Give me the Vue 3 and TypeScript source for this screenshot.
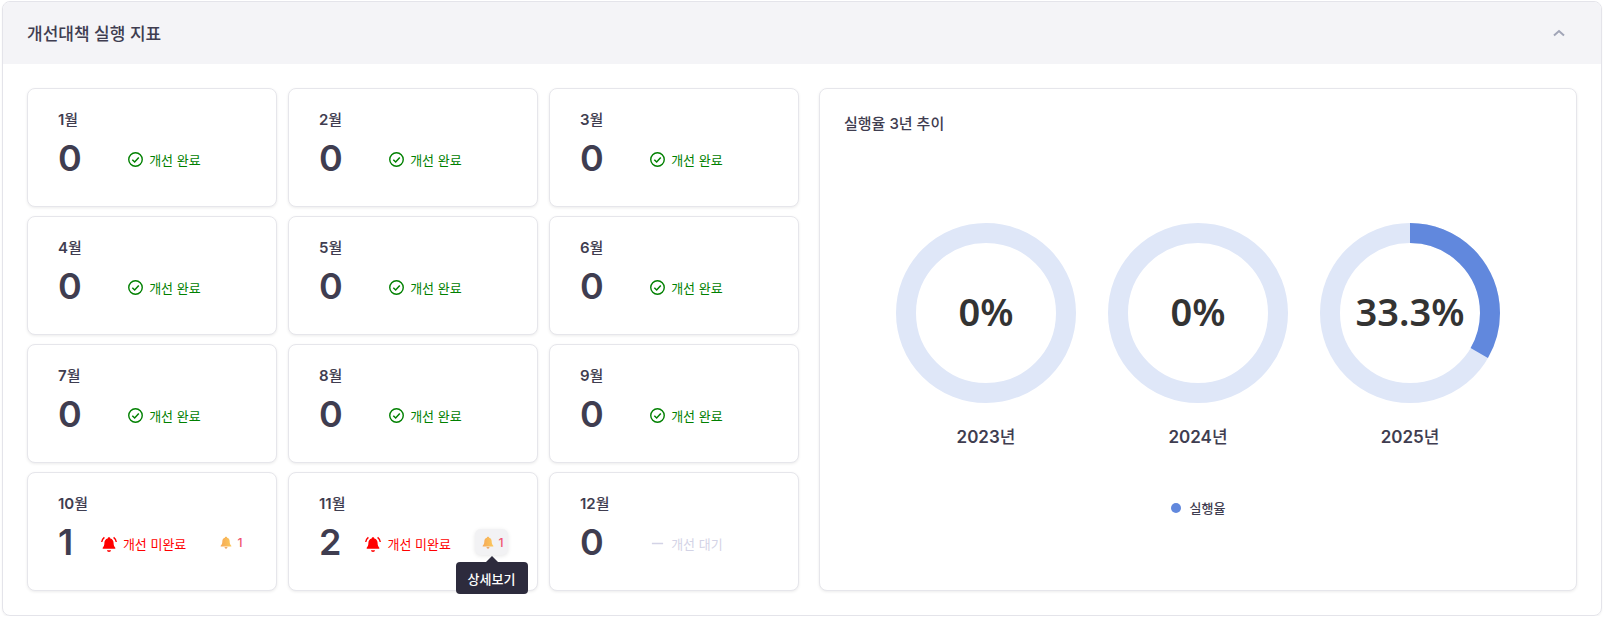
<template>
  <div class="panel">
    <div class="panel-head">
      <h3 class="panel-title">개선대책 실행 지표</h3>
      <svg class="chevron" width="14" height="14" viewBox="0 0 14 14">
        <path d="M2 9.5 L7 5 L12 9.5" fill="none" stroke="#a1a5b7" stroke-width="2" />
      </svg>
    </div>
    <div class="panel-body">
      <div class="months">
        <div v-for="m in months" :key="m.month" class="month">
          <div class="month-label"><b>{{ m.month }}</b>월</div>
          <div class="month-row">
            <span class="count">{{ m.count }}</span>
            <span class="status" :class="m.state">
              <svg v-if="m.state === 'done'" width="15" height="15" viewBox="0 0 16 16">
                <circle cx="8" cy="8" r="7.2" fill="none" stroke="#008000" stroke-width="1.5" />
                <path d="M4.6 8.2 L7.1 10.6 L11.5 5.8" fill="none" stroke="#008000" stroke-width="1.6" />
              </svg>
              <svg v-else-if="m.state === 'todo'" width="16" height="16" viewBox="0 0 16 16">
                <path d="M8 1.2c.8 0 1.300.5 1.300 1.200 2.300.5 3.300 2.300 3.300 4.600 0 2.400.6 3.600 1.700 4.700v1H1.700v-1C2.800 10.600 3.400 9.400 3.400 7c0-2.300 1-4.100 3.300-4.600 0-.7.5-1.200 1.300-1.200z" fill="#f00" />
                <path d="M6 14.200h4c0 1-.9 1.700-2 1.700s-2-.7-2-1.700z" fill="#f00" />
                <path d="M3.400 1.400C1.900 2.600 1 4.200.7 6M12.600 1.400c1.500 1.200 2.400 2.800 2.700 4.600" fill="none" stroke="#f00" stroke-width="1.400" />
              </svg>
              <svg v-else width="15" height="15" viewBox="0 0 16 16">
                <path d="M2 8 H14" stroke="#d3d3e6" stroke-width="1.600" />
              </svg>
              {{ m.text }}
            </span>
            <span v-if="m.alerts" class="alert" :class="{ hover: m.hover }">
              <svg width="12" height="13" viewBox="0 0 14 15">
                <defs>
                  <linearGradient :id="'bell' + m.month" x1="0" y1="0" x2="1" y2="0">
                    <stop offset="0" stop-color="#f6a957" />
                    <stop offset="1" stop-color="#fbc85c" />
                  </linearGradient>
                </defs>
                <path d="M7 .8c.8 0 1.300.5 1.300 1.200 2 .6 3 2.200 3 4.300 0 2.500.7 3.700 1.900 5v1H.8v-1c1.200-1.300 1.900-2.500 1.900-5 0-2.100 1-3.700 3-4.300C5.700 1.300 6.200.8 7 .8z" :fill="'url(#bell' + m.month + ')'" />
                <path d="M5.300 13h3.400c0 .9-.8 1.600-1.700 1.600S5.300 13.900 5.300 13z" fill="#e8913f" />
              </svg>
              <span class="alert-num">{{ m.alerts }}</span>
              <span v-if="m.hover" class="tooltip">상세보기</span>
            </span>
            <span v-else></span>
          </div>
        </div>
      </div>
      <div class="chart-card">
        <div class="chart-title">실행율 3년 추이</div>
        <div class="donuts">
          <div v-for="d in donuts" :key="d.year" class="donut">
            <svg width="180" height="180" viewBox="0 0 180 180">
              <circle cx="90" cy="90" :r="radius" fill="none" stroke="#dfe7f8" stroke-width="20" />
              <circle
                v-if="d.value > 0"
                cx="90"
                cy="90"
                :r="radius"
                fill="none"
                stroke="#6188dd"
                stroke-width="20"
                :stroke-dasharray="dash(d.value)"
                transform="rotate(-90 90 90)"
              />
              <text class="donut-text" x="90" y="103" text-anchor="middle">{{ d.value }}%</text>
            </svg>
            <div class="donut-year"><b>{{ d.year }}</b>년</div>
          </div>
        </div>
        <div class="legend">
          <span class="legend-dot"></span>
          <span>실행율</span>
        </div>
      </div>
    </div>
  </div>
</template>

<script setup lang="ts">
type MonthState = "done" | "todo" | "wait";

interface MonthItem {
  month: number;
  count: number;
  state: MonthState;
  text: string;
  alerts?: number;
  hover?: boolean;
}

const done = (n: number): MonthItem => ({
  month: n,
  count: 0,
  state: "done",
  text: "개선 완료",
});

const months: MonthItem[] = [
  ...[1, 2, 3, 4, 5, 6, 7, 8, 9].map(done),
  { month: 10, count: 1, state: "todo", text: "개선 미완료", alerts: 1 },
  { month: 11, count: 2, state: "todo", text: "개선 미완료", alerts: 1, hover: true },
  { month: 12, count: 0, state: "wait", text: "개선 대기" },
];

const donuts = [
  { year: 2023, value: 0 },
  { year: 2024, value: 0 },
  { year: 2025, value: 33.3 },
];

const radius = 80;
const circ = 2 * Math.PI * radius;
const dash = (v: number) => `${(circ * v) / 100} ${circ}`;
</script>

<style>
html,
body {
  background: #fff;
}
</style>

<style scoped>
.panel {
  width: 1600px;
  height: 615px;
  margin: 1px 0 0 2px;
  box-sizing: border-box;
  border: 1px solid #e4e4ea;
  border-radius: 8px;
  box-shadow: 0 1px 2px rgba(0, 0, 0, 0.06);
  overflow: hidden;
  font-family: Inter, "Noto Sans CJK KR", sans-serif;
  color: #3f3d50;
}

.panel-head {
  height: 62px;
  background: #f4f4f7;
  display: flex;
  align-items: center;
  justify-content: space-between;
  padding: 0 35px 0 24px;
}

.panel-title {
  margin: 0;
  font-size: 17px;
  font-weight: 500;
  margin-top: -2px;
}

.panel-body {
  display: flex;
  gap: 20.5px;
  padding: 24px;
}

.months {
  flex: 0 0 771.5px;
  display: grid;
  grid-template-columns: repeat(3, 249.5px);
  grid-auto-rows: 119px;
  gap: 9px 11.5px;
}

.month,
.chart-card {
  box-sizing: border-box;
  background: #fff;
  border: 1px solid #e6e6eb;
  border-radius: 8px;
  box-shadow: 0 1px 3px rgba(0, 0, 0, 0.08);
}

.month {
  padding: 21px 28.5px 21px 30px;
}

.month-label {
  font-size: 15px;
  font-weight: 500;
  line-height: 20px;
}

.month-label b,
.donut-year b {
  font-weight: 600;
}

.month-row {
  display: flex;
  align-items: center;
  justify-content: space-between;
  margin-top: 6px;
}

.count {
  font-size: 36px;
  font-weight: 600;
  line-height: 44px;
}

.status {
  display: inline-flex;
  align-items: center;
  gap: 6px;
  font-size: 13px;
  margin-top: 3px;
}

.status.done {
  color: #008000;
}

.status.todo {
  color: #f00;
}

.status.wait {
  color: #d3d3e6;
}

.alert {
  position: relative;
  box-sizing: border-box;
  width: 33px;
  height: 26px;
  padding-left: 2px;
  display: inline-flex;
  align-items: center;
  justify-content: center;
  gap: 5px;
  border-radius: 6px;
}

.alert.hover {
  background: #f2f2f4;
  box-shadow: 0 1px 4px rgba(0, 0, 0, 0.1);
}

.alert-num {
  font-size: 12px;
  font-weight: 500;
  color: #f0506e;
}

.tooltip {
  position: absolute;
  top: 33px;
  left: 50%;
  transform: translateX(-50%);
  width: 72px;
  height: 32px;
  display: flex;
  align-items: center;
  justify-content: center;
  background: #2d2b3d;
  color: #fff;
  font-size: 13px;
  font-weight: 500;
  border-radius: 4px;
}

.tooltip::before {
  content: "";
  position: absolute;
  top: -6px;
  left: 50%;
  margin-left: -6px;
  border-left: 6px solid transparent;
  border-right: 6px solid transparent;
  border-bottom: 6px solid #2d2b3d;
}

.chart-card {
  flex: 1;
  display: flex;
  flex-direction: column;
  padding: 24px;
}

.chart-title {
  font-size: 15px;
  font-weight: 500;
  line-height: 22px;
}

.donuts {
  display: flex;
  justify-content: center;
  gap: 32px;
  margin-top: 88px;
}

.donut {
  display: flex;
  flex-direction: column;
  align-items: center;
}

.donut svg {
  display: block;
}

.donut-text {
  font-family: "Noto Sans", sans-serif;
  font-size: 38px;
  font-weight: 600;
  fill: #333;
}

.donut-year {
  margin-top: 22px;
  font-size: 17px;
  font-weight: 500;
  line-height: 24px;
}

.legend {
  display: flex;
  align-items: center;
  justify-content: center;
  gap: 9px;
  margin-top: 49px;
  font-size: 13px;
  font-weight: 500;
}

.legend-dot {
  width: 10px;
  height: 10px;
  border-radius: 50%;
  background: #6188dd;
}
</style>
